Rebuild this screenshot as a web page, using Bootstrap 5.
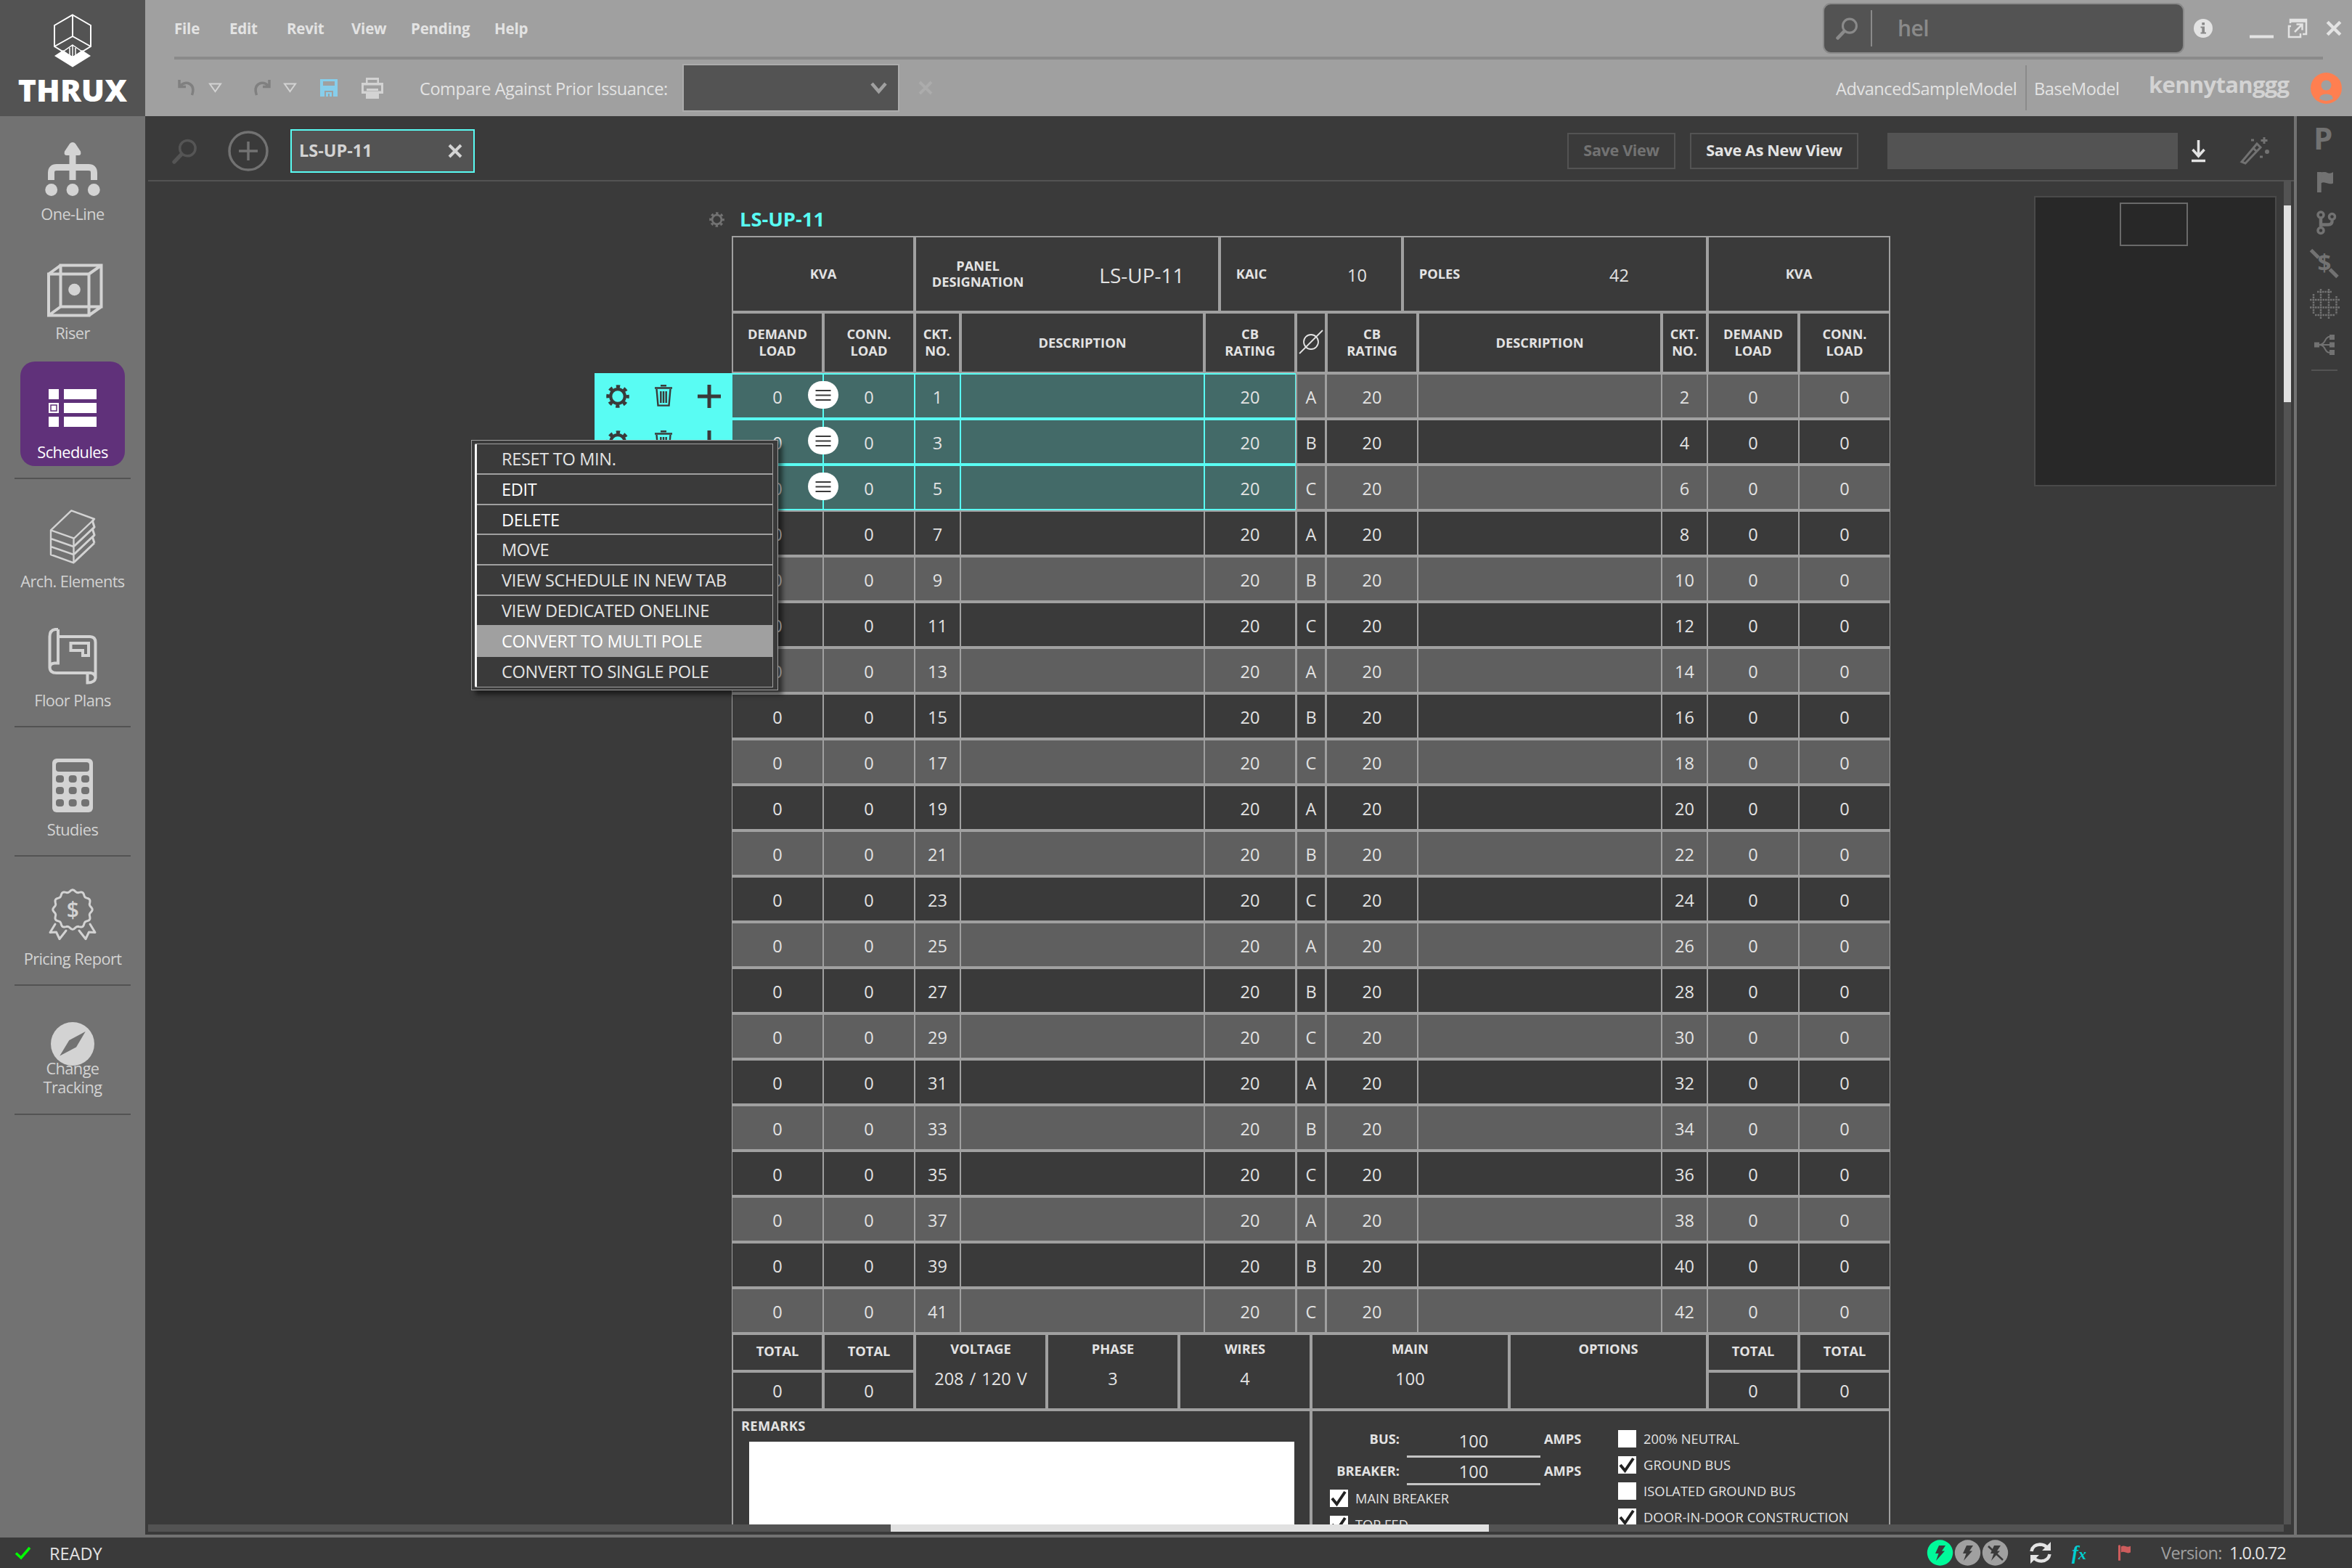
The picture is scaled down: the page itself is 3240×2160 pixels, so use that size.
<!DOCTYPE html>
<html lang="en">
<head>
    <meta charset="UTF-8">
    <meta name="viewport" content="width=device-width, initial-scale=1.0">
    <title>THRUX - Schedules</title>
    <link href="https://cdn.jsdelivr.net/npm/bootstrap@5.3.0/dist/css/bootstrap.min.css" rel="stylesheet">
    <style>
        :root { --ink: #3a3a3a; --mid: #535353; --side: #727272; --line: #a0a0a0; --txt: #e3e3e3; --cyan: #59fcf3; }
        html { overflow: hidden; height: 2160px; }
        body { width: 3240px; height: 2160px; overflow: hidden; background: var(--ink); color: var(--txt);
               font-family: "Open Sans", "Noto Sans", sans-serif; font-size: 23.5px; line-height: 26px; white-space: nowrap; }
        svg { display: block; flex: none; overflow: visible; }

        /* top */
        .top-bar { height: 160px; }
        .brand { width: 200px; background: var(--mid); color: #fff; }
        .brand b { font-size: 42.8px; font-weight: 800; line-height: 41px; }
        .head { background: var(--line); }
        .head-row { height: 78px; padding-right: 14px; }
        .head-rule { height: 4px; margin: 0 40px; background: #8a8a8a; }
        .menus { display: grid; grid-template-columns: 76px 79px 89px 82px 115px 60px; margin-left: 40px; font-size: 20.5px; font-weight: 700; letter-spacing: -.2px; }
        .search-box { width: 498px; height: 70px; background: var(--mid); border: 2px solid #8a8a8a; border-radius: 11px; color: #8a8a8a; font-size: 30px; font-weight: 600; letter-spacing: -.6px; }
        .search-box i { width: 2px; height: 50px; background: #8a8a8a; margin: 0 35px 0 17px; }
        .head-text { letter-spacing: -.42px; padding-top: 2px; }
        .prior { width: 299px; height: 66px; background: var(--mid); border: 2px solid #acacac; }
        .split { width: 2px; height: 62px; background: #8a8a8a; }
        .user { font-size: 31px; font-weight: 700; color: lightgray; letter-spacing: -.7px; }

        /* left nav */
        .side { width: 200px; background: var(--side); padding-top: 10px; color: lightgray; font-size: 21.8px; letter-spacing: -.6px; }
        .side-item { width: 144px; height: 144px; border-radius: 20px; }
        .side-item span { line-height: 41px; }
        .side-item .two { line-height: 26px; margin-top: -19px; text-align: center; white-space: normal; }
        .side-item.on { background: #60317a; color: #fff; }
        .side hr { width: 160px; height: 2px; margin: 16px 0; border: 0; background: var(--mid); opacity: 1; }

        /* tool strip */
        .strip { height: 88px; padding-top: 8px; font-weight: 700; }
        .tab-on { width: 254px; height: 60px; border: 2px solid var(--cyan); background: var(--mid); color: lightgray; padding: 0 15px 0 10px; font-size: 23.5px; }
        .tab-on span { margin-top: -3px; }
        .box-btn { height: 50px; border: 2px solid var(--mid); font-size: 21.6px; letter-spacing: -.35px; padding-bottom: 2px; }
        .name-box { width: 400px; height: 50px; background: var(--mid); }
        .pane { margin-left: 4px; height: 1866px; border-top: 2px solid var(--mid); padding: 0 4px 4px 0; display: grid; grid-template: 1850px 10px / 2942px 10px; }
        .canvas { overflow: hidden; }
        .track { background: var(--mid); }
        .thumb { background: #e1e1e1; }
        .rail { width: 80px; border-left: 4px solid var(--side); }
        .workspace { border-bottom: 4px solid var(--side); }

        /* schedule */
        .sched-title { height: 75px; padding: 29px 0 0 773px; font-size: 27.3px; font-weight: 700; color: var(--cyan); }
        .sched { width: 1596px; margin-left: 804px; }
        .g-top { display: grid; grid-template-columns: 252px 420px 252px 420px 252px; height: 105px; }
        .g-cols { display: grid; grid-template-columns: 126px 126px 63px 336px 126px 42px 126px 336px 63px 126px 126px; height: 84px; line-height: 23px; }
        .g-row { display: grid; grid-template-columns: 126px 126px 63px 336px 126px 42px 126px 336px 63px 126px 126px; height: 63px; }
        .g-foot { display: grid; grid-template: 52px 53px / 126px 126px 182px 182px 182px 273px 273px 126px 126px; grid-auto-flow: column; }
        .g-notes { display: grid; grid-template-columns: 798px 798px; height: 300px; }
        .hc { border: 2px solid var(--line); display: flex; align-items: center; justify-content: center; text-align: center; }
        .g-top .hc, .g-cols .hc { padding-bottom: 2px; }
        .lb { font-size: 18.3px; font-weight: 700; }
        .tall { grid-row: span 2; flex-direction: column; justify-content: flex-start; padding-top: 6px; }
        .tall div + div { margin-top: 15px; word-spacing: 2px; }
        .dc { border: 2px solid var(--line); border-width: 2px 1px; display: flex; align-items: center; justify-content: center; padding-top: 2px; }
        .dc.ph { border-width: 2px; }
        .odd .dc { background: #5f5f5f; }
        .picked .dc:nth-child(-n+5) { background: #436a68; border-color: var(--cyan); }
        .remark-box { width: 751px; height: 200px; background: #fff; margin: 8px 0 0 11px; }
        .rating { display: grid; grid-template-columns: 88px 184px 60px; column-gap: 10px; }
        .rating .lb { margin-top: -3px; }
        .rating .val { border-bottom: 3px solid #c4c4c4; text-align: center; }
        .rating .amp { margin-left: -5px; }
        .opt { height: 36px; font-size: 18.3px; gap: 10px; }
        .opt i { width: 25px; height: 24px; background: #fff; }

        /* floating parts */
        .acts { position: absolute; left: 615px; top: 264px; width: 190px; height: 189px; background: var(--cyan); }
        .acts > div { height: 63px; padding: 0 16px; }
        .grips { position: absolute; left: 909px; top: 264px; }
        .grips > div { height: 63px; padding-top: 11px; }
        .grips svg { background: #fff; border-radius: 19px; }
        .ctx { position: absolute; left: 445px; top: 356px; width: 423px; height: 345px; background: var(--ink); border: 1px solid var(--line); padding: 4px 6px 3px 4px; box-shadow: 6px 6px 6px rgba(0,0,0,.5); letter-spacing: -.3px; }
        .ctx-in { border: 1px solid var(--line); border-left: 3px solid #f5f5f5; height: 336px; border-radius: 2px 0 0 2px; }
        .ctx-in div { height: 41.8px; line-height: 41px; padding-left: 34px; border-bottom: 2px solid var(--line); }
        .ctx-in div:nth-child(8) { border: 0; }
        .ctx-in .hot { background: var(--line); }
        .map { position: absolute; left: 2598px; top: 20px; width: 334px; height: 400px; background: #282828; border: 2px solid #4a4a4a; }
        .map i { display: block; width: 94px; height: 60px; margin: 7px 0 0 116px; border: 2px solid #6a6a6a; }

        .status { height: 42px; }
    </style>
</head>
<body>
    <svg width="0" height="0" class="position-absolute">
        <symbol id="gear" viewBox="0 0 32 32"><g fill="none" stroke="currentColor"><circle cx="16" cy="16" r="9.8" stroke-width="4.2"/><circle cx="16" cy="16" r="13.6" stroke-width="4.4" stroke-dasharray="5.3 5.38" stroke-dashoffset="2.6"/></g></symbol>
        <symbol id="trash" viewBox="0 0 24 31"><g fill="none" stroke="currentColor" stroke-width="2.4"><path d="M0 4.5H24M8 1.2H16M2.5 6L4.5 28.6H19.5L21.5 6M8.3 9V25M12 9V25M15.7 9V25"/></g></symbol>
        <symbol id="find" viewBox="0 0 36 36"><g fill="none" stroke="currentColor"><circle cx="22" cy="13.5" r="11" stroke-width="3.6"/><path d="M13 22.5L3 33" stroke-width="5.4" stroke-linecap="round"/></g></symbol>
        <symbol id="cross" viewBox="0 0 20 20"><path d="M2 2L18 18M18 2L2 18" stroke="currentColor" stroke-width="4" fill="none"/></symbol>
        <symbol id="flag" viewBox="0 0 22 28"><path d="M0 1Q2 -1 4 1V28H0ZM5 3Q9 .5 13 2.5T22 2V13.5Q18 15.5 13 13.5T5 13.5Z" fill="currentColor"/></symbol>
        <symbol id="tick" viewBox="0 0 25 24"><path d="M3 12L9.5 20L21 3" fill="none" stroke="#222" stroke-width="4"/></symbol>
    </svg>

    <div class="top-bar d-flex">
        <div class="brand d-flex flex-column align-items-center">
            <svg width="200" height="103" viewBox="0 0 200 103" fill="none" stroke="#fff" stroke-width="2">
                <path d="M100 20.500L125 35V64L100 79L75 64V35ZM100 20.500V50L75 64M100 50L125 64"/>
                <path d="M100 62L113 71L100 79L87 71ZM96 66V77M100 63V79M104 66V77" stroke-width="1.500"/>
                <path d="M75 77L87 69L100 79L113 69L125 77L100 92.500Z" fill="#fff" stroke="none"/>
            </svg>
            <b>THRUX</b>
        </div>
        <div class="head flex-grow-1">
            <div class="head-row d-flex align-items-center">
                <div class="menus"><span>File</span><span>Edit</span><span>Revit</span><span>View</span><span>Pending</span><span>Help</span></div>
                <div class="search-box d-flex align-items-center ms-auto">
                    <svg class="ms-3" width="31" height="31"><use href="#find"/></svg><i></i>hel
                </div>
                <svg style="margin-left:13px" width="26" height="26" viewBox="0 0 26 26"><circle cx="13" cy="13" r="13" fill="#e3e3e3"/><path d="M11.300 5H15V8.500H11.300ZM9.500 10.500H15V18.500H17V20.500H9.500V18.500H11.300V12.500H9.500Z" fill="#8a8a8a"/></svg>
                <svg style="margin-left:51px" width="33" height="26"><path d="M0 24.500H33" stroke="#e3e3e3" stroke-width="4"/></svg>
                <svg style="margin-left:20px" width="26" height="26" viewBox="0 0 26 26" fill="none" stroke="#e3e3e3" stroke-width="2"><path d="M3 6V1H25V21H20M3 3.500H25" stroke-width="2.500"/><path d="M4 10H1V25H17V20M9 18L19 8M11.500 7.500H19.500V15.500" stroke-width="2.500"/></svg>
                <svg style="margin-left:26px" width="22" height="22" color="#e3e3e3"><use href="#cross"/></svg>
            </div>
            <div class="head-rule"></div>
            <div class="head-row d-flex align-items-center">
                <svg style="margin-left:45px" width="24" height="22" viewBox="0 0 24 22" fill="none" stroke="#808080" stroke-width="3.500"><path d="M2 0V9.500H11M2.500 9Q8 3 14 4.500Q24 8 19.500 21"/></svg>
                <svg style="margin-left:18px" width="19" height="14" fill="none" stroke="lightgray" stroke-width="2"><path d="M2 1.500H17L9.500 12Z"/></svg>
                <svg style="margin-left:43px" width="24" height="22" viewBox="0 0 24 22" fill="none" stroke="#808080" stroke-width="3.500"><path d="M22 0V9.500H13M21.500 9Q16 3 10 4.500Q0 8 4.500 21"/></svg>
                <svg style="margin-left:17px" width="19" height="14" fill="none" stroke="lightgray" stroke-width="2"><path d="M2 1.500H17L9.500 12Z"/></svg>
                <svg style="margin-left:32px" width="24" height="24" fill="skyblue" fill-rule="evenodd"><path d="M0 0H24V24H18V16H6V24H0ZM4 3V9H20V3ZM8 18H16V24H13V20H11V24H8Z"/></svg>
                <svg style="margin-left:33px" width="30" height="29" fill="lightgray" fill-rule="evenodd"><path d="M6 0H24V7H30V22H24V29H6V22H0V7H6ZM8.500 3V7H21.500V3ZM3 10.500V18.500H27V10.500ZM7 15H23V18H7Z"/></svg>
                <span class="head-text" style="margin-left:50px;width:342px">Compare Against Prior Issuance:</span>
                <div class="prior d-flex align-items-center justify-content-end" style="margin-left:20px">
                    <svg class="me-3" width="21" height="17" fill="none" stroke="#a0a0a0" stroke-width="4.500"><path d="M1 2L10.500 13L20 2"/></svg>
                </div>
                <svg style="margin-left:26px" width="20" height="20" color="#acacac"><use href="#cross"/></svg>
                <span class="ms-auto head-text" style="width:251px">AdvancedSampleModel</span>
                <i class="split" style="margin:0 10px"></i>
                <span class="head-text" style="width:158px">BaseModel</span>
                <span class="user" style="width:223px;margin-top:-11px">kennytanggg</span>
                <svg width="43" height="43" viewBox="0 0 43 43"><circle cx="21.500" cy="21.500" r="21.500" fill="coral"/><circle cx="21.500" cy="17.500" r="7" fill="#a0a0a0"/><path d="M12 36Q13 29.500 21.500 29.500T31 36Q21.500 42 12 36Z" fill="#a0a0a0"/></svg>
            </div>
        </div>
    </div>

    <div class="d-flex" style="height:1958px">
        <div class="side d-flex flex-column align-items-center">
            <div class="side-item d-flex flex-column align-items-center" style="margin-bottom:20px">
                <svg width="144" height="104" fill="none" stroke="lightgray" stroke-width="9"><path d="M42.500 78V68Q42.500 60.500 50 60.500H94Q101.500 60.500 101.500 68V78M72 40V78"/><g fill="lightgray" stroke="none"><path d="M72 26Q74.500 26 76 28L83 38.500Q84.500 44 80 44H64Q59.500 44 61 38.500L68 28Q69.500 26 72 26Z"/><circle cx="42.700" cy="91.500" r="8.400"/><circle cx="72" cy="91.500" r="8.400"/><circle cx="101.300" cy="91.500" r="8.400"/></g></svg>
                <span>One-Line</span>
            </div>
            <div class="side-item d-flex flex-column align-items-center" style="margin-bottom:20px">
                <svg width="144" height="104" fill="none" stroke="lightgray" stroke-width="4"><path d="M39 43.500H94.500V100.500H39ZM55.500 31.500H111.500V88.500H55.500ZM39 43.500L55.500 31.500M94.500 43.500L111.500 31.500M39 100.500L55.500 88.500M94.500 100.500L111.500 88.500"/><circle cx="74.500" cy="65" r="8.300" fill="lightgray" stroke="none"/></svg>
                <span>Riser</span>
            </div>
            <div class="side-item on d-flex flex-column align-items-center">
                <svg width="144" height="104" fill="#fff"><path d="M39 38H53V52H39ZM39 57H53V71H39ZM39 76H53V90H39ZM60 38H105V52H60ZM60 57H105V71H60ZM60 76H105V90H60Z"/><path d="M42 60H50V68H42Z" fill="none" stroke="#60317a" stroke-width="1.500"/></svg>
                <span>Schedules</span>
            </div>
            <hr>
            <div class="side-item d-flex flex-column align-items-center" style="margin-bottom:20px">
                <svg width="144" height="104" fill="none" stroke="lightgray" stroke-width="2.400" stroke-linejoin="round"><path d="M70.300 27.400L102 39L74 65.600L42 54.400ZM42 54.400V88L73.500 99.300V66M42 66L73.500 77M42 77L73.500 88"/><path d="M74 76.500L102 50M74 87.500L102 61M74 98.500L102 72M101 40L99.500 42L102 50L99.500 53L102 61L99.500 64L102 72" stroke-width="3"/></svg>
                <span>Arch. Elements</span>
            </div>
            <div class="side-item d-flex flex-column align-items-center">
                <svg width="144" height="104" fill="none" stroke="lightgray" stroke-width="4"><path d="M52 27H48Q40.500 28 40.500 37V79Q40.500 87 50 87H92.500M52 27V73.500H47Q40.500 74 40.500 80M54 37H96Q103.500 37 103.500 45V94Q102.500 100.500 92.500 100.500V87H97Q103.500 88 103.500 94M69.500 46H94V63H86V56H69.500Z"/></svg>
                <span>Floor Plans</span>
            </div>
            <hr>
            <div class="side-item d-flex flex-column align-items-center">
                <svg width="144" height="104"><rect x="44" y="27" width="56" height="74" rx="6" fill="lightgray"/><rect x="49" y="32" width="46" height="13" rx="4" fill="#727272"/><g id="keys" fill="#727272"></g></svg>
                <span>Studies</span>
            </div>
            <hr>
            <div class="side-item d-flex flex-column align-items-center">
                <svg width="144" height="104" fill="none" stroke="lightgray" stroke-width="3" stroke-linejoin="round" stroke-linecap="round"><path id="seal"/><path d="M48 77L41 88.500L49.500 88L54 97.500L63 86M96 77L103 88.500L94.500 88L90 97.500L81 86"/><text x="72" y="68" text-anchor="middle" font-size="30" font-weight="600" fill="lightgray" stroke="none">$</text></svg>
                <span>Pricing Report</span>
            </div>
            <hr>
            <div class="side-item d-flex flex-column align-items-center">
                <svg width="144" height="104"><circle cx="72" cy="64" r="30" fill="lightgray"/><path d="M89.700 47L77 68.500L54.300 80.500L67.300 59Z" fill="#727272"/></svg>
                <span class="two">Change<br>Tracking</span>
            </div>
            <hr>
        </div>

        <div class="workspace d-flex flex-grow-1">
            <div class="flex-grow-1">
                <div class="strip d-flex align-items-center">
                    <svg style="margin-left:37px" width="35" height="35" color="#555"><use href="#find"/></svg>
                    <svg style="margin-left:42px" width="56" height="56" fill="none" stroke="#727272" stroke-width="3.500"><circle cx="28" cy="28" r="26"/><path d="M15 28H41M28 15V41"/></svg>
                    <div class="tab-on d-flex align-items-center justify-content-between" style="margin-left:30px"><span>LS-UP-11</span><svg width="20" height="20" color="#d3d3d3"><use href="#cross"/></svg></div>
                    <div class="box-btn d-flex align-items-center justify-content-center ms-auto" style="width:149px;color:#727272">Save View</div>
                    <div class="box-btn d-flex align-items-center justify-content-center" style="width:232px;margin-left:20px">Save As New View</div>
                    <div class="name-box" style="margin-left:40px"></div>
                    <svg style="margin-left:19px" width="19" height="30" fill="none" stroke="#e3e3e3" stroke-width="3.500"><path d="M9.500 0V21M1.500 13L9.500 22L17.500 13M0 28.500H19"/></svg>
                    <svg style="margin-left:48px;margin-right:33px" width="41" height="38" fill="none" stroke="#727272" stroke-width="3"><path d="M2 34L23 9L28 14L7 36ZM18 15L23 20"/><path d="M33 0V9M28.500 4.500H37.500M15 4H19M27 27H31"/><circle cx="37" cy="20" r="3" fill="#727272" stroke="none"/></svg>
                </div>
                <div class="pane">
                    <div class="canvas position-relative">
                        <div class="sched-title d-flex align-items-center"><svg width="21" height="21" color="#727272"><use href="#gear"/></svg><span style="margin-left:21px">LS-UP-11</span></div>
                        <div class="sched">
                            <div class="g-top">
                                <div class="hc lb">KVA</div>
                                <div class="hc"><div class="lb" style="width:170px;line-height:22px">PANEL<br>DESIGNATION</div><div class="flex-grow-1" style="font-size:28px;padding:4px 0 0 36px">LS-UP-11</div></div>
                                <div class="hc"><span class="lb" style="width:84px">KAIC</span><div class="flex-grow-1 pt-1" style="padding-left:43px">10</div></div>
                                <div class="hc"><span class="lb" style="width:98px">POLES</span><div class="flex-grow-1 pt-1" style="padding-left:79px">42</div></div>
                                <div class="hc lb">KVA</div>
                            </div>
                            <div class="g-cols lb">
                                <div class="hc">DEMAND<br>LOAD</div><div class="hc">CONN.<br>LOAD</div><div class="hc">CKT.<br>NO.</div><div class="hc">DESCRIPTION</div><div class="hc">CB<br>RATING</div>
                                <div class="hc"><svg width="34" height="34" fill="none" stroke="#e3e3e3" stroke-width="1.800"><circle cx="17" cy="17" r="10"/><path d="M1 33L33 1"/></svg></div>
                                <div class="hc">CB<br>RATING</div><div class="hc">DESCRIPTION</div><div class="hc">CKT.<br>NO.</div><div class="hc">DEMAND<br>LOAD</div><div class="hc">CONN.<br>LOAD</div>
                            </div>
                            <div id="rows"></div>
                            <div class="g-foot">
                                <div class="hc lb pb-1">TOTAL</div><div class="hc">0</div><div class="hc lb pb-1">TOTAL</div><div class="hc">0</div>
                                <div class="hc tall"><div class="lb">VOLTAGE</div><div>208 / 120 V</div></div>
                                <div class="hc tall"><div class="lb">PHASE</div><div>3</div></div>
                                <div class="hc tall"><div class="lb">WIRES</div><div>4</div></div>
                                <div class="hc tall"><div class="lb">MAIN</div><div>100</div></div>
                                <div class="hc tall"><div class="lb">OPTIONS</div></div>
                                <div class="hc lb pb-1">TOTAL</div><div class="hc">0</div><div class="hc lb pb-1">TOTAL</div><div class="hc">0</div>
                            </div>
                            <div class="g-notes">
                                <div class="hc d-block text-start" style="padding:6px 0 0 11px"><div class="lb" style="line-height:28px;letter-spacing:.3px">REMARKS</div><div class="remark-box"></div></div>
                                <div class="hc d-flex align-items-start justify-content-start text-start">
                                    <div style="width:421px;padding:28px 0 0 24px">
                                        <div class="rating" style="margin-left:8px;row-gap:10px">
                                            <span class="lb text-end">BUS:</span><span class="val" style="height:36px">100</span><span class="lb amp">AMPS</span>
                                            <span class="lb text-end" style="margin-top:-5px">BREAKER:</span><span class="val" style="height:32px;margin-top:-4px">100</span><span class="lb amp" style="margin-top:-5px">AMPS</span>
                                        </div>
                                        <div class="opt d-flex align-items-center"><i><svg width="25" height="24"><use href="#tick"/></svg></i>MAIN BREAKER</div>
                                        <div class="opt d-flex align-items-center"><i><svg width="25" height="24"><use href="#tick"/></svg></i>TOP FED</div>
                                    </div>
                                    <div style="padding-top:20px;letter-spacing:.1px">
                                        <div class="opt d-flex align-items-center"><i></i>200% NEUTRAL</div>
                                        <div class="opt d-flex align-items-center"><i><svg width="25" height="24"><use href="#tick"/></svg></i>GROUND BUS</div>
                                        <div class="opt d-flex align-items-center"><i></i>ISOLATED GROUND BUS</div>
                                        <div class="opt d-flex align-items-center"><i><svg width="25" height="24"><use href="#tick"/></svg></i>DOOR-IN-DOOR CONSTRUCTION</div>
                                    </div>
                                </div>
                            </div>
                        </div>

                        <div class="acts" id="acts"></div>
                        <div class="grips" id="grips"></div>
                        <div class="ctx"><div class="ctx-in">
                            <div>RESET TO MIN.</div><div class="text-white">EDIT</div><div class="text-white">DELETE</div><div>MOVE</div><div>VIEW SCHEDULE IN NEW TAB</div><div>VIEW DEDICATED ONELINE</div><div class="hot text-white">CONVERT TO MULTI POLE</div><div>CONVERT TO SINGLE POLE</div>
                        </div></div>
                        <div class="map"><i></i></div>
                    </div>
                    <div class="track"><div class="thumb" style="margin-top:33px;height:271px"></div></div>
                    <div class="track"><div class="thumb" style="margin-left:1023px;width:824px;height:10px"></div></div>
                </div>
            </div>
            <div class="rail">
                <svg width="76" height="360" viewBox="3164 160 76 360" color="#727272" fill="none" stroke="#727272" stroke-width="3.500">
                    <text x="3187" y="206" font-size="42" font-weight="700" fill="#727272" stroke="none">P</text>
                    <use href="#flag" x="3192" y="237" width="22" height="28"/>
                    <path d="M3197 301V312M3212.500 304Q3213 309.500 3207 309.500H3198" stroke-width="4.500"/><circle cx="3197" cy="296" r="4"/><circle cx="3197" cy="317.500" r="4"/><circle cx="3212.500" cy="298.500" r="4"/>
                    <path d="M3183.500 344.500L3194 355M3209.500 371L3220 381.500" stroke-width="5"/>
                    <text x="3202" y="374" text-anchor="middle" font-size="33" font-weight="700" fill="#727272" stroke="none">$</text>
                    <path d="M3197 398V439M3208 398V439M3182 413H3223M3182 423.500H3223M3187 405V433M3218.500 408V433M3192 402H3213M3189 434H3216" stroke-width="2.500" stroke-dasharray="2.500 1"/>
                    <path d="M3191 475H3210M3195 475Q3200 475 3203 469T3211 464M3195 475Q3200 475 3203 481T3211 485.500" stroke-width="2"/><path d="M3188 471.500H3195V478.500H3188ZM3209 461H3216V468H3209ZM3209 471.500H3216V478.500H3209ZM3209 482H3216V489H3209Z" fill="#727272" stroke="none"/>
                    <path d="M3184 510H3220" stroke="#535353" stroke-width="2"/>
                </svg>
            </div>
        </div>
    </div>

    <div class="status d-flex align-items-center">
        <svg style="margin-left:21px" width="21" height="17" fill="none" stroke="lime" stroke-width="3.500"><path d="M1 8.500L8 15L20 1"/></svg>
        <span style="margin-left:26px;padding-top:2px">READY</span>
        <svg class="ms-auto" width="111" height="36"><circle cx="17.500" cy="18" r="17.700" fill="#00fa9a"/><circle cx="55.500" cy="18" r="17.700" fill="#a0a0a0"/><circle cx="93.500" cy="18" r="17.700" fill="#a0a0a0"/><g fill="#3a3a3a"><path id="bolt" d="M16 8H25L20 15.500H24L12 29L15.500 19H11Z"/><use href="#bolt" x="38"/><use href="#bolt" x="76"/></g><path d="M84 9L104 28" stroke="#3a3a3a" stroke-width="2.500"/></svg>
        <svg style="margin-left:30px" width="30" height="32" fill="none" stroke="#e3e3e3" stroke-width="4.500"><path d="M2.500 14Q4 5 14 4.500Q21 4.500 25 10M27.500 18Q26 27 16 27.500Q9 27.500 5 22"/><path d="M29 1V13H17ZM1 31V19H13Z" fill="#e3e3e3" stroke="none"/></svg>
        <i style="width:21px;margin-left:28px;font:italic 600 27px 'Liberation Serif',serif;color:#00ced1">f<small style="font-size:22px">x</small></i>
        <svg style="margin-left:43px" width="17" height="22" color="indianred"><use href="#flag"/></svg>
        <span style="margin-left:42px;width:94px;color:#a0a0a0;letter-spacing:-.6px">Version:</span><span style="width:169px;letter-spacing:-1px">1.0.0.72</span>
    </div>

    <script>
        // Circuit rows, odd circuits on the left and even on the right
        const rows = document.getElementById('rows');
        for (let i = 0; i < 21; i++) {
            const row = document.createElement('div');
            row.className = 'g-row' + (i % 2 === 0 ? ' odd' : '') + (i < 3 ? ' picked' : '');
            const cells = [0, 0, 2 * i + 1, '', 20, 'ABC'[i % 3], 20, '', 2 * i + 2, 0, 0];
            row.innerHTML = cells.map((c, n) => `<div class="dc${n === 5 ? ' ph' : ''}">${c}</div>`).join('');
            rows.appendChild(row);
        }

        // Row actions and drag grips for the selected circuits
        document.getElementById('acts').innerHTML = `<div class="d-flex align-items-center justify-content-between" style="color:#3a3a3a">
            <svg width="32" height="32"><use href="#gear"/></svg><svg width="24" height="31"><use href="#trash"/></svg>
            <svg width="32" height="32"><path d="M0 16H32M16 0V32" stroke="#3a3a3a" stroke-width="5"/></svg></div>`.repeat(3);
        document.getElementById('grips').innerHTML = '<div><svg width="42" height="38"><path d="M10.500 13H31.500M10.500 19.500H31.500M10.500 26H31.500" stroke="#3a3a3a" stroke-width="2"/></svg></div>'.repeat(3);

        // Calculator keys
        let keys = '';
        for (const y of [50, 66, 83]) for (const x of [49, 66.7, 84]) keys += `<rect x="${x}" y="${y}" width="11" height="10" rx="4"/>`;
        document.getElementById('keys').innerHTML = keys;

        // Scalloped edge of the pricing seal
        let seal = '';
        for (let a = 0; a < 360; a += 3) {
            const t = a * Math.PI / 180, r = 25.7 + 1.5 * Math.cos(12 * t);
            seal += (a ? 'L' : 'M') + (72 + r * Math.cos(t)).toFixed(1) + ' ' + (57 + r * Math.sin(t)).toFixed(1);
        }
        document.getElementById('seal').setAttribute('d', seal + 'Z');
    </script>
</body>
</html>
